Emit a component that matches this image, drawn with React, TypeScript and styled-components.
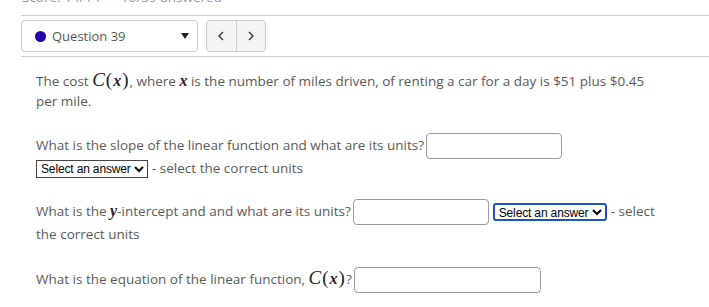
import styled, { createGlobalStyle } from "styled-components";

const GlobalStyle = createGlobalStyle`
  body {
    margin: 0;
    background: #fff;
    font-family: "Open Sans", "Liberation Sans", sans-serif;
    font-size: 13.5px;
    color: #5a5a5a;
  }
`;

const Page = styled.div`
  padding-left: 21px;
  overflow: hidden;
  height: 307px;
`;

const ScoreLine = styled.div`
  margin-top: -13px;
  height: 20px;
  line-height: 20px;
  color: #999;
  padding-left: 1px;
  white-space: pre;
`;

const Rule = styled.div<{ $top: number; $bottom: number }>`
  height: 1px;
  background: #ccc;
  margin: ${(p) => `${p.$top}px 0 ${p.$bottom}px`};
`;

const NavRow = styled.div`
  display: flex;
  gap: 8px;
  height: 32px;
`;

const QuestionPicker = styled.div`
  width: 177px;
  box-sizing: border-box;
  border: 1px solid #ccc;
  border-radius: 4px;
  display: flex;
  align-items: center;
  padding: 0 8px 0 13px;
  font-size: 13px;
  color: #555;
`;

const StatusDot = styled.span`
  width: 11px;
  height: 11px;
  border-radius: 50%;
  background: #2400a8;
  margin-right: 6px;
`;

const PickerLabel = styled.span`
  flex: 1;
`;

const NavGroup = styled.div`
  display: flex;
  width: 60px;
  box-sizing: border-box;
  border: 1px solid #ccc;
  border-radius: 4px;
  background: #f5f5f5;
  overflow: hidden;
`;

const NavButton = styled.button`
  flex: 1;
  border: 0;
  background: transparent;
  padding: 0;
  display: flex;
  align-items: center;
  justify-content: center;
  & + & {
    border-left: 1px solid #ccc;
  }
`;

const Body = styled.div`
  padding-left: 15px;
  line-height: 20px;
`;

const Intro = styled.p`
  margin: 13px 0 0;
  max-width: 618px;
`;

const Question = styled.p<{ $top: number }>`
  margin: ${(p) => p.$top}px 0 0;
  line-height: 23px;
  max-width: 640px;
`;

const Math = styled.span`
  font-family: "Liberation Serif", "DejaVu Serif", serif;
  font-style: italic;
  font-size: 19px;
  color: #222;
`;

const MathVar = styled.span`
  font-family: "Liberation Serif", serif;
  font-style: italic;
  font-weight: bold;
  font-size: 16px;
  color: #222;
`;

const Paren = styled.span`
  font-style: normal;
  margin: 0 1px;
`;

const AnswerBox = styled.input<{ $width: number }>`
  width: ${(p) => p.$width}px;
  height: 26px;
  box-sizing: border-box;
  border: 1px solid #999;
  border-radius: 4px;
  vertical-align: middle;
  margin: -3px 0 -3px 2px;
  padding: 0 4px;
`;

const UnitSelect = styled.select<{ $focused?: boolean }>`
  font-family: "Liberation Sans", Arial, sans-serif;
  font-size: 12px;
  letter-spacing: -0.15px;
  color: #000;
  width: ${(p) => (p.$focused ? "114px" : "112px")};
  height: 18px;
  padding: 0;
  border: ${(p) => (p.$focused ? "2px solid #1a55c8" : "1px solid #444")};
  border-radius: ${(p) => (p.$focused ? "3px" : "0")};
  background: #fff;
  vertical-align: middle;
  margin: -2px 4px -2px ${(p) => (p.$focused ? "4px" : "0")};
`;

function CostFn() {
  return (
    <Math>
      C<Paren>(</Paren>
      <MathVar>x</MathVar>
      <Paren>)</Paren>
    </Math>
  );
}

function Chevron({ dir }: { dir: "left" | "right" }) {
  return (
    <svg width="6" height="10" viewBox="0 0 6 10">
      <polyline
        points={dir === "left" ? "5,1 1,5 5,9" : "1,1 5,5 1,9"}
        fill="none"
        stroke="#333"
        strokeWidth="1.4"
      />
    </svg>
  );
}

export default function App() {
  return (
    <>
      <GlobalStyle />
      <Page>
        <ScoreLine>Score: 14/14      10/39 answered</ScoreLine>
        <Rule $top={8} $bottom={4} />
        <NavRow>
          <QuestionPicker>
            <StatusDot />
            <PickerLabel>Question 39</PickerLabel>
            <svg width="8" height="6" viewBox="0 0 8 6">
              <polygon points="0,0 8,0 4,6" fill="#222" />
            </svg>
          </QuestionPicker>
          <NavGroup>
            <NavButton aria-label="Previous">
              <Chevron dir="left" />
            </NavButton>
            <NavButton aria-label="Next">
              <Chevron dir="right" />
            </NavButton>
          </NavGroup>
        </NavRow>
        <Rule $top={4} $bottom={0} />
        <Body>
          <Intro>
            The cost <CostFn />, where <MathVar>x</MathVar> is the number of miles driven, of renting
            a car for a day is $51 plus $0.45 per mile.
          </Intro>
          <Question $top={23}>
            What is the slope of the linear function and what are its units?
            <AnswerBox $width={136} />
            <br />
            <UnitSelect defaultValue="">
              <option value="">Select an answer</option>
            </UnitSelect>
            - select the correct units
          </Question>
          <Question $top={19}>
            What is the <MathVar>y</MathVar>-intercept and and what are its units?
            <AnswerBox $width={136} />
            <UnitSelect $focused defaultValue="">
              <option value="">Select an answer</option>
            </UnitSelect>
            - select the correct units
          </Question>
          <Question $top={20}>
            What is the equation of the linear function, <CostFn />?
            <AnswerBox $width={187} />
          </Question>
        </Body>
      </Page>
    </>
  );
}
